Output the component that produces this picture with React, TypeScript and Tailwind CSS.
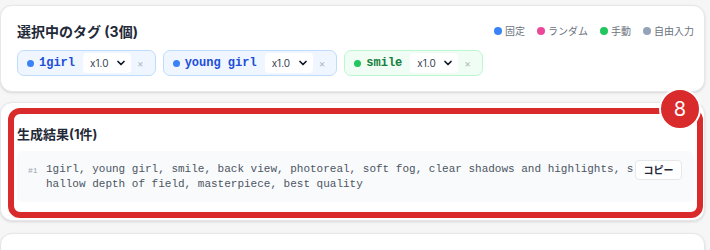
import { ChevronDown } from "lucide-react";

const sans = { fontFamily: '"Inter", "Noto Sans CJK JP", sans-serif' };
const mono = { fontFamily: '"Liberation Mono", "Noto Sans CJK JP", monospace' };

type Tag = { name: string; kind: "fixed" | "manual" };

const tags: Tag[] = [
  { name: "1girl", kind: "fixed" },
  { name: "young girl", kind: "fixed" },
  { name: "smile", kind: "manual" },
];

const legend = [
  { label: "固定", dot: "bg-[#3b82f6]" },
  { label: "ランダム", dot: "bg-[#ec4899]" },
  { label: "手動", dot: "bg-[#22c55e]" },
  { label: "自由入力", dot: "bg-[#94a3b8]" },
];

function TagChip({ tag }: { tag: Tag }) {
  const green = tag.kind === "manual";
  return (
    <div
      className={
        green
          ? "flex h-[26px] items-center rounded-[7px] border border-[#bbf7d0] bg-[#f0fdf4] pl-[9px] pr-[11px]"
          : "flex h-[26px] items-center rounded-[7px] border border-[#bfdbfe] bg-[#eff6ff] pl-[9px] pr-[11px]"
      }
    >
      <span className={green ? "h-[7px] w-[7px] rounded-full bg-[#22c55e]" : "h-[7px] w-[7px] rounded-full bg-[#3b82f6]"} />
      <span
        className={green ? "ml-[5px] text-[12px] font-bold text-[#15803d]" : "ml-[5px] text-[12px] font-bold text-[#1d4ed8]"}
        style={mono}
      >
        {tag.name}
      </span>
      <div className="ml-[8px] flex h-[20px] w-[48px] items-center justify-between rounded-[4px] bg-white pl-[7px] pr-[4px] text-[10px] text-[#374151]">
        <span>x1.0</span>
        <ChevronDown size={12} strokeWidth={3.5} className="text-[#111827]" />
      </div>
      <span className="ml-[6px] text-[10px] text-[#b0b5bd]">×</span>
    </div>
  );
}

export default function App() {
  return (
    <div className="relative h-[250px] w-[710px] overflow-hidden bg-[#f6f6f7] pt-[5px]" style={sans}>
      {/* selected tags */}
      <div className="w-[705px] rounded-[12px] border border-[#e5e7eb] bg-white pb-[15px] pl-[16px] pr-[10px] pt-[15px] shadow-sm">
        <div className="flex h-[20px] items-center justify-between">
          <h2 className="text-[14px] font-bold text-[#1f2937]">選択中のタグ (3個)</h2>
          <div className="flex items-center gap-[12px] text-[10px] text-[#6b7280]">
            {legend.map((l) => (
              <div key={l.label} className="flex items-center gap-[3px]">
                <span className={`h-[8px] w-[8px] rounded-full ${l.dot}`} />
                <span>{l.label}</span>
              </div>
            ))}
          </div>
        </div>
        <div className="mt-[9px] flex gap-[7px]">
          {tags.map((t) => (
            <TagChip key={t.name} tag={t} />
          ))}
        </div>
      </div>

      {/* result */}
      <div className="mt-[10px] w-[705px] rounded-[12px] border border-[#e5e7eb] bg-white pb-[18px] pl-[16px] pr-[10px] pt-[22px] shadow-sm">
        <h2 className="text-[13px] font-bold leading-[18px] text-[#1f2937]">生成結果(1件)</h2>
        <div className="mt-[8px] flex items-start rounded-[6px] bg-[#f9fafb] pb-[10px] pl-[11px] pr-[12px] pt-[11px]">
          <span className="w-[18px] pt-[2px] text-[8px] leading-[13px] text-[#9ca3af]" style={mono}>
            #1
          </span>
          <p className="w-[590px] break-all text-[11px] leading-[15px] text-[#4b5563]" style={mono}>
            1girl, young girl, smile, back view, photoreal, soft fog, clear shadows and highlights, shallow depth of field, masterpiece, best quality
          </p>
          <button className="ml-auto -mt-[2px] h-[20px] w-[47px] rounded-[4px] border border-[#e5e7eb] bg-white text-[10px] font-semibold text-[#1f2937]">
            コピー
          </button>
        </div>
      </div>

      <div className="mt-[12px] h-[40px] w-[705px] rounded-[12px] border border-[#e5e7eb] bg-white shadow-sm" />

      {/* annotation */}
      <div className="absolute left-[8px] top-[108px] h-[110px] w-[695px] rounded-[12px] border-[6px] border-[#d92b2b]" />
      <div className="absolute left-[659px] top-[88px] flex h-[42px] w-[42px] items-center justify-center rounded-full border-2 border-white bg-[#d92b2b] text-[20px] text-white">
        8
      </div>
    </div>
  );
}
